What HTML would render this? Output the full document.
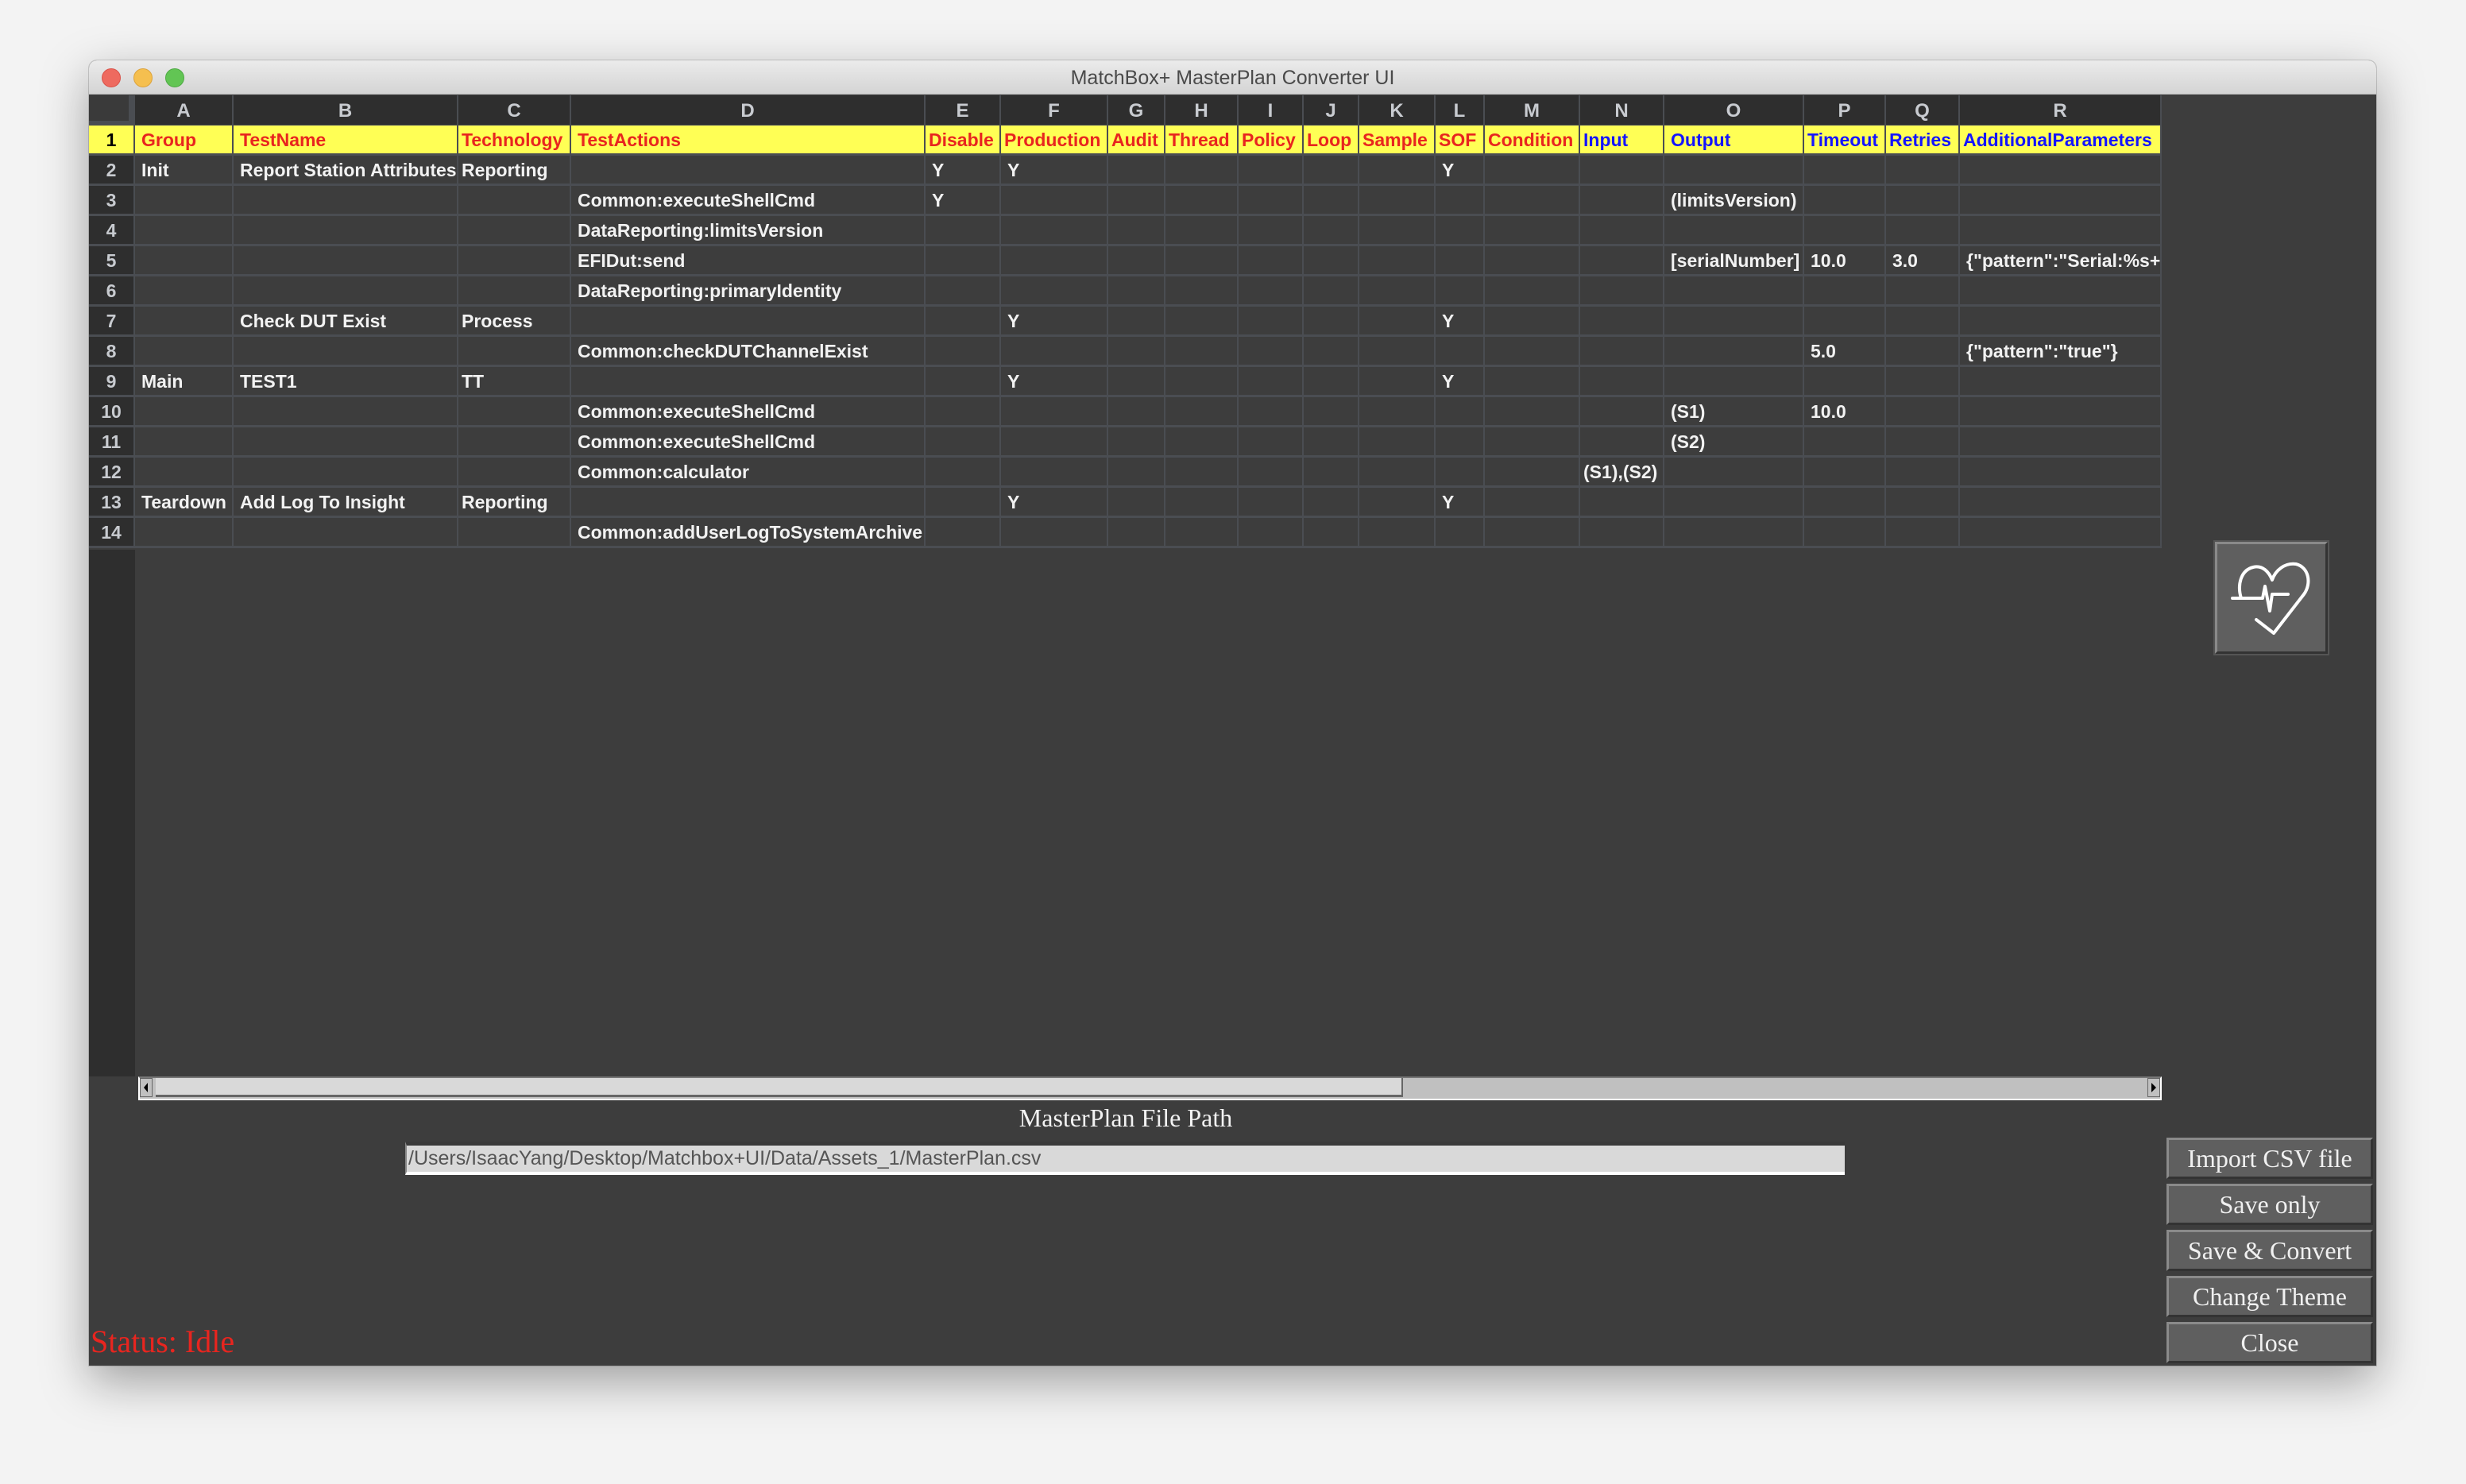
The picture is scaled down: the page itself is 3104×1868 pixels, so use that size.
<!DOCTYPE html>
<html><head><meta charset="utf-8"><style>
*{margin:0;padding:0;box-sizing:border-box}
body{width:3104px;height:1868px;background:#f3f3f3;position:relative;overflow:hidden;font-family:"Liberation Sans",sans-serif}
.win{position:absolute;left:112px;top:76px;width:2879px;height:1643px;background:#3d3d3d;box-shadow:0 20px 60px rgba(0,0,0,.35),0 0 0 1px rgba(0,0,0,.15);border-radius:10px 10px 0 0;overflow:hidden}
.tb{position:absolute;left:0;top:0;width:100%;height:43px;background:linear-gradient(#ebebeb,#d4d4d4);border-bottom:1px solid #b8b8b8;text-align:center;font-size:25px;line-height:44px;color:#4a4a4a}
.dot{position:absolute;top:10px;width:24px;height:24px;border-radius:50%}
.grid{position:absolute;left:0;top:44px;display:grid;grid-template-columns:58px 124px 283px 142px 446px 95px 135px 72px 92px 82px 70px 96px 62px 120px 106px 176px 103px 93px 254px;grid-auto-rows:38px}
.grid div{border-right:2px solid #4a4d52;border-bottom:3px solid #4a4d52;font-weight:bold;font-size:23px;line-height:36px;padding-left:8px;color:#f2f2f2;white-space:nowrap;overflow:hidden;background:#3d3d3d}
.grid .h{background:#2e2e2e;color:#c8cbd0;text-align:center;padding:0;font-size:24px;height:40px;line-height:40px}
.grid .r{background:#2e2e2e;color:#c8cbd0;text-align:center;padding:0}
.grid .y{background:#ffff55;color:#e8251f}
.grid .yb{background:#ffff55;color:#1414ff}
.grid .y1{background:#ffff55;color:#000;text-align:center;padding:0}
.rowstrip{position:absolute;left:0;top:616px;width:58px;height:663px;background:#2e2e2e}
.sb{position:absolute;left:62px;top:1279px;width:2547px;height:30px;background:#c0c0c0;border:2px solid #fff;border-top-color:#777}
.thumb{position:absolute;left:20px;top:0;width:1570px;height:24px;background:#d9d9d9;border-bottom:3px solid #666;border-right:2px solid #666}
.arr{position:absolute;top:0;width:16px;height:24px;background:#c0c0c0;border:1px solid #666}
.lbl{position:absolute;left:0;width:2610px;top:1313px;text-align:center;font-family:"Liberation Serif",serif;font-size:32px;color:#f2f2f2}
.path{position:absolute;left:398px;top:1361px;width:1812px;height:42px;background:#d9d9d9;border-top:5px solid #3a3a3a;border-bottom:4px solid #fff;border-left:2px solid #888;font-size:25px;line-height:32px;color:#555;padding-left:2px}
.status{position:absolute;left:2px;top:1589px;font-family:"Liberation Serif",serif;font-size:40px;color:#e8251f}
.btn{position:absolute;left:2615px;width:260px;height:52px;background:#5f5f5f;border:3px solid;border-color:#8a8a8a #333 #333 #8a8a8a;color:#f0f0f0;font-family:"Liberation Serif",serif;font-size:32px;text-align:center;line-height:46px;white-space:nowrap}
.icon{position:absolute;left:2676px;top:606px;width:142px;height:141px;background:#5f5f5f;border:3px solid;border-color:#8a8a8a #333 #333 #8a8a8a;outline:2px solid #555}
</style></head><body>
<div class="win">
<div class="tb">MatchBox+ MasterPlan Converter UI
<div class="dot" style="left:16px;background:#ee6a5f;border:1px solid #d9534a"></div>
<div class="dot" style="left:56px;background:#f5bf4f;border:1px solid #dca33d"></div>
<div class="dot" style="left:96px;background:#62c554;border:1px solid #4fa944"></div>
</div>
<div class="rowstrip"></div>
<div class="grid">
<div class="h" style="background:#3a3a3a;border:8px solid #4a4d52;border-left:0;border-top:0"></div><div class="h">A</div><div class="h">B</div><div class="h">C</div><div class="h">D</div><div class="h">E</div><div class="h">F</div><div class="h">G</div><div class="h">H</div><div class="h">I</div><div class="h">J</div><div class="h">K</div><div class="h">L</div><div class="h">M</div><div class="h">N</div><div class="h">O</div><div class="h">P</div><div class="h">Q</div><div class="h">R</div>
<div class="y1">1</div><div class="y">Group</div><div class="y">TestName</div><div class="y" style="padding-left:4px">Technology</div><div class="y">TestActions</div><div class="y" style="padding-left:4px">Disable</div><div class="y" style="padding-left:4px">Production</div><div class="y" style="padding-left:4px">Audit</div><div class="y" style="padding-left:4px">Thread</div><div class="y" style="padding-left:4px">Policy</div><div class="y" style="padding-left:4px">Loop</div><div class="y" style="padding-left:4px">Sample</div><div class="y" style="padding-left:4px">SOF</div><div class="y" style="padding-left:4px">Condition</div><div class="yb" style="padding-left:4px">Input</div><div class="yb">Output</div><div class="yb" style="padding-left:4px">Timeout</div><div class="yb" style="padding-left:4px">Retries</div><div class="yb" style="padding-left:4px">AdditionalParameters</div>
<div class="r">2</div><div>Init</div><div>Report Station Attributes</div><div style="padding-left:4px">Reporting</div><div></div><div>Y</div><div>Y</div><div></div><div></div><div></div><div></div><div></div><div>Y</div><div></div><div></div><div></div><div></div><div></div><div></div>
<div class="r">3</div><div></div><div></div><div></div><div>Common:executeShellCmd</div><div>Y</div><div></div><div></div><div></div><div></div><div></div><div></div><div></div><div></div><div></div><div>(limitsVersion)</div><div></div><div></div><div></div>
<div class="r">4</div><div></div><div></div><div></div><div>DataReporting:limitsVersion</div><div></div><div></div><div></div><div></div><div></div><div></div><div></div><div></div><div></div><div></div><div></div><div></div><div></div><div></div>
<div class="r">5</div><div></div><div></div><div></div><div>EFIDut:send</div><div></div><div></div><div></div><div></div><div></div><div></div><div></div><div></div><div></div><div></div><div>[serialNumber]</div><div>10.0</div><div>3.0</div><div>{"pattern":"Serial:%s+(\S+)"}</div>
<div class="r">6</div><div></div><div></div><div></div><div>DataReporting:primaryIdentity</div><div></div><div></div><div></div><div></div><div></div><div></div><div></div><div></div><div></div><div></div><div></div><div></div><div></div><div></div>
<div class="r">7</div><div></div><div>Check DUT Exist</div><div style="padding-left:4px">Process</div><div></div><div></div><div>Y</div><div></div><div></div><div></div><div></div><div></div><div>Y</div><div></div><div></div><div></div><div></div><div></div><div></div>
<div class="r">8</div><div></div><div></div><div></div><div>Common:checkDUTChannelExist</div><div></div><div></div><div></div><div></div><div></div><div></div><div></div><div></div><div></div><div></div><div></div><div>5.0</div><div></div><div>{"pattern":"true"}</div>
<div class="r">9</div><div>Main</div><div>TEST1</div><div style="padding-left:4px">TT</div><div></div><div></div><div>Y</div><div></div><div></div><div></div><div></div><div></div><div>Y</div><div></div><div></div><div></div><div></div><div></div><div></div>
<div class="r">10</div><div></div><div></div><div></div><div>Common:executeShellCmd</div><div></div><div></div><div></div><div></div><div></div><div></div><div></div><div></div><div></div><div></div><div>(S1)</div><div>10.0</div><div></div><div></div>
<div class="r">11</div><div></div><div></div><div></div><div>Common:executeShellCmd</div><div></div><div></div><div></div><div></div><div></div><div></div><div></div><div></div><div></div><div></div><div>(S2)</div><div></div><div></div><div></div>
<div class="r">12</div><div></div><div></div><div></div><div>Common:calculator</div><div></div><div></div><div></div><div></div><div></div><div></div><div></div><div></div><div></div><div style="padding-left:4px">(S1),(S2)</div><div></div><div></div><div></div><div></div>
<div class="r">13</div><div>Teardown</div><div>Add Log To Insight</div><div style="padding-left:4px">Reporting</div><div></div><div></div><div>Y</div><div></div><div></div><div></div><div></div><div></div><div>Y</div><div></div><div></div><div></div><div></div><div></div><div></div>
<div class="r">14</div><div></div><div></div><div></div><div>Common:addUserLogToSystemArchive</div><div></div><div></div><div></div><div></div><div></div><div></div><div></div><div></div><div></div><div></div><div></div><div></div><div></div><div></div>
</div>
<div class="sb"><div class="thumb"></div>
<div class="arr" style="left:0"><svg width="14" height="22"><path d="M9 5 L4 11 L9 17Z" fill="#000"/></svg></div>
<div class="arr" style="right:0"><svg width="14" height="22"><path d="M4 5 L10 11 L4 17Z" fill="#000"/></svg></div>
</div>
<div class="lbl">MasterPlan File Path</div>
<div class="path">/Users/IsaacYang/Desktop/Matchbox+UI/Data/Assets_1/MasterPlan.csv</div>
<div class="status">Status: Idle</div>
<div class="icon"><svg width="136" height="135" viewBox="3 3 136 135"><g fill="none" stroke="#fff" stroke-width="4" stroke-linejoin="round" stroke-linecap="round"><path d="M22 71 H60 L63 56 L69 87 L72 66 H92"/><path d="M33 71 C28 55 32 36 48 32 C60 29 68 38 72 48 C76 36 88 26 102 28 C118 32 122 52 112 66 L74 115 L52 98"/></g></svg></div>
<div class="btn" style="top:1356px">Import CSV file</div>
<div class="btn" style="top:1414px">Save only</div>
<div class="btn" style="top:1472px">Save &amp; Convert</div>
<div class="btn" style="top:1530px">Change Theme</div>
<div class="btn" style="top:1588px">Close</div>
</div>
</body></html>
